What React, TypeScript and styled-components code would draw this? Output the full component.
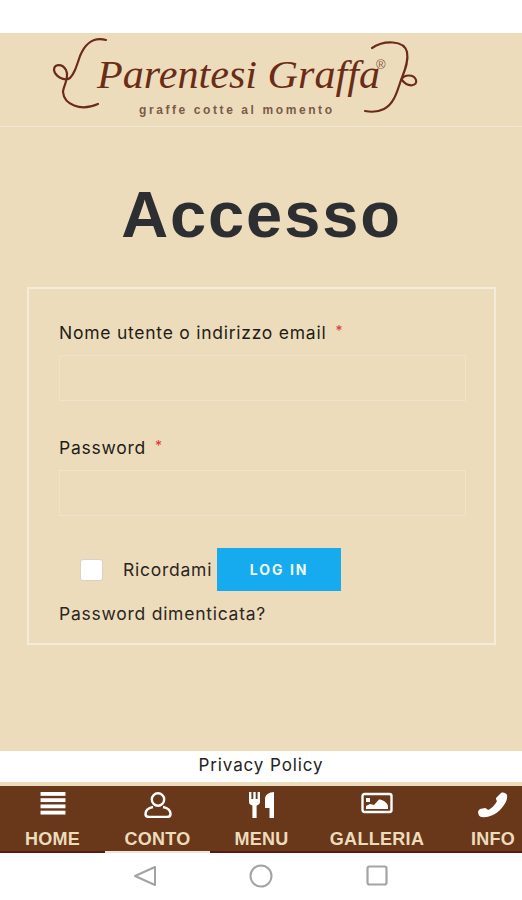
import styled, { createGlobalStyle } from "styled-components";

const GlobalStyle = createGlobalStyle`
  html, body {
    margin: 0;
    padding: 0;
    background: #fff;
    font-family: "Inter", "Liberation Sans", sans-serif;
  }
`;

const navItems = [
  { label: "HOME", width: 105, icon: "menu" },
  { label: "CONTO", width: 105, icon: "user", active: true },
  { label: "MENU", width: 103, icon: "cutlery" },
  { label: "GALLERIA", width: 128, icon: "image" },
  { label: "INFO", width: 104, icon: "phone" },
];

const NavIcon = ({ name }: { name: string }) => {
  if (name === "menu") {
    return (
      <svg width="28" height="23" viewBox="0 0 28 24" fill="#fff">
        <rect x="1" y="0" width="26" height="4" />
        <rect x="1" y="6.5" width="26" height="4" />
        <rect x="1" y="13" width="26" height="4" />
        <rect x="1" y="19.5" width="26" height="4" />
      </svg>
    );
  }
  if (name === "user") {
    return (
      <svg width="28" height="26" viewBox="0 0 28 26" fill="none" stroke="#fff" strokeWidth="2.4">
        <ellipse cx="14" cy="7.5" rx="6.2" ry="6.2" />
        <path d="M9 15 C4 16 1.5 19 1.5 22 C1.5 24 3 25 5 25 H23 C25 25 26.5 24 26.5 22 C26.5 19 24 16 19 15" />
      </svg>
    );
  }
  if (name === "cutlery") {
    return (
      <svg width="26" height="26" viewBox="0 0 26 26" fill="#fff">
        <path d="M0 0 H2.4 V7 H4.3 V0 H6.7 V7 H8.6 V0 H11 V10 C11 12 9.5 13 7.6 13.5 V26 H3.4 V13.5 C1.5 13 0 12 0 10 Z" />
        <path d="M25 0 V26 H20.5 V16 H16 V7 C16 3 20 0 25 0 Z" />
      </svg>
    );
  }
  if (name === "image") {
    return (
      <svg width="32" height="24" viewBox="0 0 32 24" fill="none">
        <rect x="1.5" y="2" width="29" height="18" rx="2" stroke="#fff" strokeWidth="2.4" />
        <rect x="5" y="6" width="4" height="4" fill="#fff" />
        <path d="M5 17 V14 L9 12 L13 13 L18 7.5 C21 7.5 26 10 27 14 V17 Z" fill="#fff" />
      </svg>
    );
  }
  return (
    <svg width="32" height="26" viewBox="0 0 32 26" fill="#fff">
      <path d="M24 1 C26 0 29 1 30 3 C31 7 28 13 23 18 C18 23 10 26 5 25 C3 25 1 23 1 20 C1 19 2 18 3 17 L8 16 C9 16 10 17 11 18 C14 17 18 13 20 9 C19 8 19 7 19 6 Z" />
    </svg>
  );
};

const App = () => {
  return (
    <>
      <GlobalStyle />
      <Page>
        <TopStrip />
        <Header>
          <svg width="522" height="93" viewBox="0 33 522 93">
            <g fill="none" stroke="#6a2c17" strokeWidth="2.2" strokeLinecap="round">
              <path d="M106 40 C92 36 84 46 80 56 C76 68 74 74 70 78 C64 82 55 76 54 70 C54 64 62 63 66 70 C70 78 63 86 63 92 C64 104 80 112 98 104" />
              <path d="M372 48 C384 40 404 40 407 52 C409 62 404 72 401 80 C397 92 394 104 384 109 C378 112 370 112 365 111 M401 80 C404 74 414 74 416 80 C418 86 408 88 402 80" />
            </g>
            <text
              x="97"
              y="88"
              textLength="283"
              lengthAdjust="spacingAndGlyphs"
              fontFamily="'Liberation Serif', serif"
              fontStyle="italic"
              fontSize="41"
              fill="#6a2c17"
            >
              Parentesi Graffa
            </text>
            <text x="376" y="69" fontFamily="'Liberation Sans', sans-serif" fontSize="13" fill="#8a5a40">
              ®
            </text>
            <text
              x="139"
              y="114"
              textLength="193"
              fontFamily="'Liberation Sans', sans-serif"
              fontSize="12"
              fontWeight="bold"
              fill="#7a5a48"
            >
              graffe cotte al momento
            </text>
          </svg>
        </Header>
        <Main>
          <Title>Accesso</Title>
          <Card>
            <Label>
              Nome utente o indirizzo email<Star>*</Star>
            </Label>
            <Field />
            <Label $top={34}>
              Password<Star>*</Star>
            </Label>
            <Field />
            <RememberRow>
              <CheckBox />
              <RememberText>Ricordami</RememberText>
              <LoginButton>LOG IN</LoginButton>
            </RememberRow>
            <LostLink>Password dimenticata?</LostLink>
          </Card>
        </Main>
        <PrivacyBar>Privacy Policy</PrivacyBar>
        <NavBar>
          {navItems.map((item) => (
            <NavItem key={item.label} $width={item.width} $active={item.active}>
              <IconSlot>
                <NavIcon name={item.icon} />
              </IconSlot>
              <NavLabel>{item.label}</NavLabel>
            </NavItem>
          ))}
        </NavBar>
        <SystemBar>
          <svg width="24" height="24" viewBox="0 0 24 24" fill="none" stroke="#a3a3a3" strokeWidth="2">
            <path d="M22 3 V21 L2 12 Z" strokeLinejoin="round" />
          </svg>
          <svg width="24" height="24" viewBox="0 0 24 24" fill="none" stroke="#a3a3a3" strokeWidth="2">
            <circle cx="12" cy="12" r="10.5" />
          </svg>
          <svg width="24" height="24" viewBox="0 0 24 24" fill="none" stroke="#a3a3a3" strokeWidth="2.2">
            <rect x="2.5" y="2.5" width="19" height="18" rx="2" />
          </svg>
        </SystemBar>
      </Page>
    </>
  );
};

const Page = styled.div`
  width: 522px;
  height: 900px;
  overflow: hidden;
  display: flex;
  flex-direction: column;
  background: #fff;
`;

const TopStrip = styled.div`
  height: 33px;
  background: #fff;
`;

const Header = styled.header`
  height: 93px;
  background: #eddcbc;
  border-bottom: 1px solid #f2e7d3;
  display: flex;
`;

const Main = styled.main`
  height: 624px;
  box-sizing: border-box;
  background: #eddcbc;
  padding: 53px 26px 0 27px;
`;

const Title = styled.h1`
  margin: 0 0 37px;
  text-align: center;
  font-family: "Liberation Sans", sans-serif;
  font-size: 65px;
  line-height: 70px;
  font-weight: 700;
  letter-spacing: 1.9px;
  color: #2c2e31;
`;

const Card = styled.section`
  height: 358px;
  box-sizing: border-box;
  border: 2px solid #f3ebdc;
  padding: 31px 30px 0;
`;

const Label = styled.div<{ $top?: number }>`
  margin-top: ${(props) => props.$top || 0}px;
  font-size: 17.5px;
  line-height: 22px;
  letter-spacing: 0.75px;
  color: #1f1c18;
`;

const Star = styled.span`
  margin-left: 9px;
  color: #e0303a;
  font-size: 14px;
  vertical-align: 3px;
`;

const Field = styled.div`
  margin-top: 11px;
  width: 407px;
  height: 46px;
  box-sizing: border-box;
  border: 1px solid #f1e3cb;
`;

const RememberRow = styled.div`
  margin-top: 32px;
  display: flex;
  align-items: center;
`;

const CheckBox = styled.div`
  width: 23px;
  height: 22px;
  margin-left: 21px;
  box-sizing: border-box;
  background: #fff;
  border: 1px solid #d8d2c8;
  border-radius: 3px;
`;

const RememberText = styled.span`
  margin-left: 20px;
  font-size: 17.5px;
  letter-spacing: 0.75px;
  color: #2a2622;
`;

const LoginButton = styled.button`
  width: 124px;
  height: 43px;
  margin-left: 5px;
  padding: 0;
  border: none;
  background: #16abee;
  color: #eef8fd;
  font-family: "Inter", "Liberation Sans", sans-serif;
  font-size: 14px;
  font-weight: 700;
  letter-spacing: 2px;
`;

const LostLink = styled.div`
  margin-top: 12px;
  font-size: 17.5px;
  line-height: 22px;
  letter-spacing: 0.75px;
  color: #2a2622;
`;

const PrivacyBar = styled.div`
  height: 31px;
  box-sizing: border-box;
  padding-bottom: 3px;
  background: #fff;
  display: flex;
  align-items: center;
  justify-content: center;
  font-size: 17px;
  letter-spacing: 0.9px;
  color: #222;
`;

const NavBar = styled.nav`
  height: 71px;
  box-sizing: border-box;
  border-top: 4px solid #eddcbc;
  background: #693719;
  display: flex;
  overflow: hidden;
`;

const NavItem = styled.div<{ $width: number; $active?: boolean }>`
  flex: 0 0 ${(props) => props.$width}px;
  box-sizing: border-box;
  display: flex;
  flex-direction: column;
  align-items: center;
  border-bottom: 2px solid ${(props) => (props.$active ? "#f1e6d6" : "#5c1a0c")};
`;

const IconSlot = styled.div`
  height: 39px;
  padding-top: 6px;
  box-sizing: border-box;
  display: flex;
  align-items: flex-start;
`;

const NavLabel = styled.span`
  margin-top: 5px;
  font-family: "Liberation Sans", sans-serif;
  font-size: 18px;
  line-height: 18px;
  font-weight: 700;
  letter-spacing: 0.3px;
  color: #eddcbc;
`;

const SystemBar = styled.div`
  flex: 1;
  background: #fff;
  display: flex;
  align-items: center;
  justify-content: center;
  gap: 92px;
  padding-bottom: 2px;
`;

export default App;
